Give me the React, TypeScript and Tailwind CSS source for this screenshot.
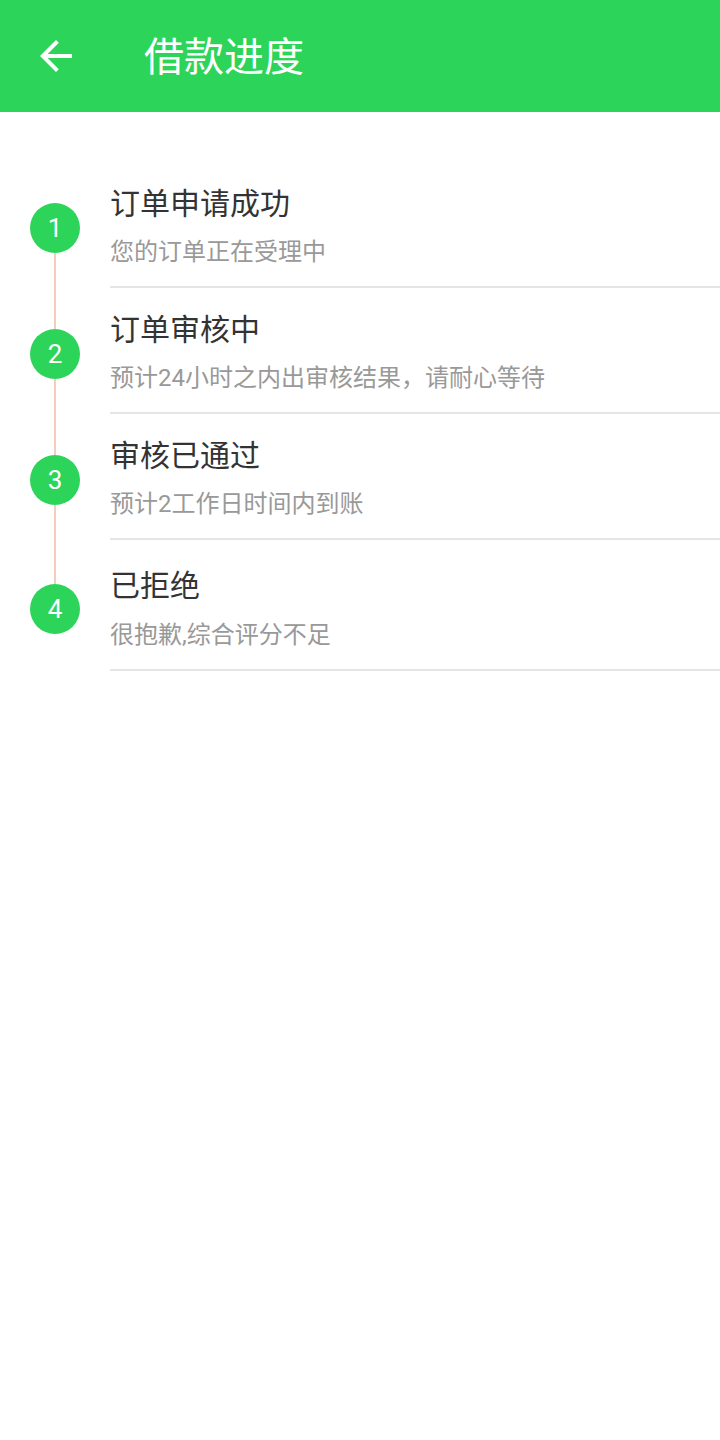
import React from "react";

const steps = [
  { n: 1, title: "订单申请成功", sub: "您的订单正在受理中", last: false },
  { n: 2, title: "订单审核中", sub: "预计24小时之内出审核结果，请耐心等待", last: false },
  { n: 3, title: "审核已通过", sub: "预计2工作日时间内到账", last: false },
  { n: 4, title: "已拒绝", sub: "很抱歉,综合评分不足", last: true },
];

export default function App() {
  return (
    <div
      className="w-[720px] h-[1440px] bg-white"
      style={{ fontFamily: 'Roboto, "Noto Sans CJK SC", sans-serif' }}
    >
      <header className="h-[112px] bg-[#2cd55a] flex items-center">
        <div className="ml-[32px] w-[48px] h-[48px] flex items-center justify-center">
          <svg width="48" height="48" viewBox="0 0 24 24" fill="#ffffff">
            <path d="M20 11H7.83l5.59-5.59L12 4l-8 8 8 8 1.41-1.41L7.83 13H20v-2z" />
          </svg>
        </div>
        <h1 className="ml-[64px] mt-[4px] text-[40px] leading-[48px] text-white font-normal">借款进度</h1>
      </header>
      <div className="mt-[50px]">
        {steps.map((s, i) => (
          <div key={s.n} className="flex">
            <div className="w-[110px] flex flex-col items-center">
              <div className={`grow basis-[6px] w-[2px] ${i === 0 ? "bg-transparent" : "bg-[#f6cdbd]"}`} />
              <div className="w-[50px] h-[50px] rounded-full bg-[#2cd55a] flex items-center justify-center text-white text-[26px] leading-none">
                {s.n}
              </div>
              <div className={`grow basis-0 w-[2px] ${s.last ? "bg-transparent" : "bg-[#f6cdbd]"}`} />
            </div>
            <div className="flex-1 flex flex-col">
              <div className={s.last ? "pt-[26px]" : "pt-[22px]"}>
                <div className="text-[30px] leading-[40px] text-[#333333]">{s.title}</div>
                <div className={`${s.last ? "mt-[13px]" : "mt-[12px]"} text-[24px] leading-[32px] text-[#999999]`}>{s.sub}</div>
              </div>
              <div className="h-[18px]" />
              <div className="h-[2px] bg-[#e5e5e5]" />
            </div>
          </div>
        ))}
      </div>
    </div>
  );
}
